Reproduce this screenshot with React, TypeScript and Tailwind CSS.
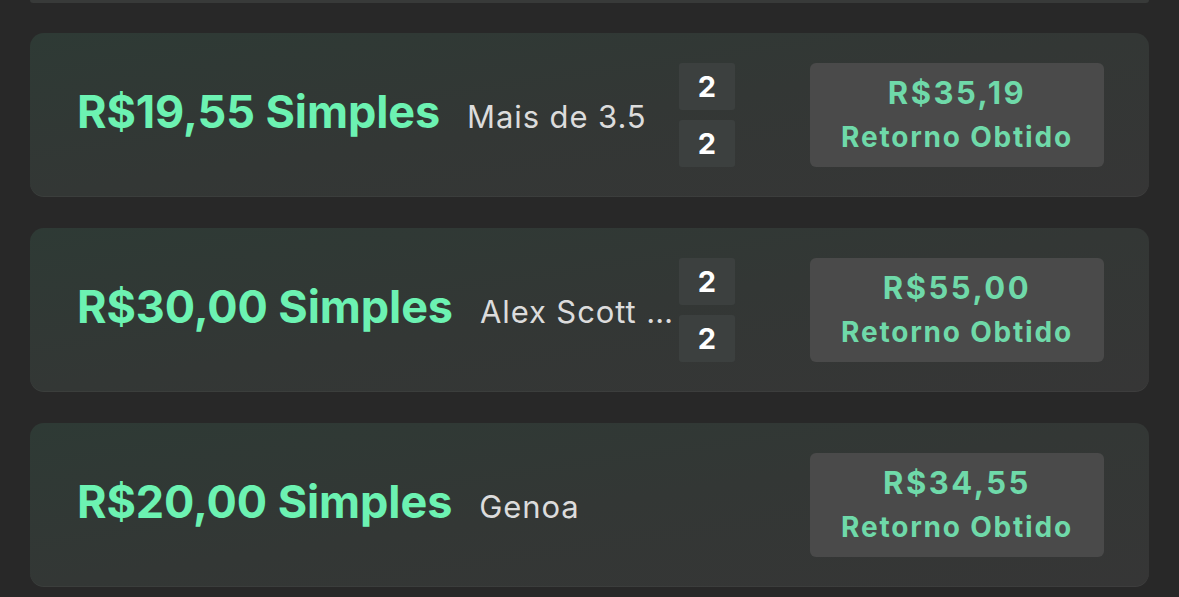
import React from 'react'

type Bet = {
  stake: string
  pick: string
  odds?: [string, string]
  ret: string
}

const bets: Bet[] = [
  { stake: 'R$19,55', pick: 'Mais de 3.5', odds: ['2', '2'], ret: 'R$35,19' },
  { stake: 'R$30,00', pick: 'Alex Scott …', odds: ['2', '2'], ret: 'R$55,00' },
  { stake: 'R$20,00', pick: 'Genoa', ret: 'R$34,55' },
]

function BetCard({ bet }: { bet: Bet }) {
  return (
    <div className="h-[164px] rounded-[14px] bg-gradient-to-br from-[#2e3a35] via-[#333735] to-[#363636] flex items-center pl-[47px] pr-[45px] shadow-[inset_0_-1px_0_rgba(255,255,255,0.04)]">
      <div className="flex items-baseline min-w-0 w-[600px] shrink-0 mb-[6px]">
        <span className="text-[45px] leading-[1.15] font-bold text-[#6cf2b2] whitespace-nowrap tracking-[-0.1px]">
          {bet.stake} Simples
        </span>
        <span className="ml-[27px] text-[31px] leading-[1.3] text-[#dcdcdc] whitespace-nowrap tracking-[0.9px]">
          {bet.pick}
        </span>
      </div>
      <div className="w-[56px] flex flex-col gap-[10px] ml-auto">
        {bet.odds?.map((o, i) => (
          <div
            key={i}
            className="h-[47px] rounded-[3px] bg-[#3c403f] flex items-center justify-center text-[29px] font-bold text-white"
          >
            {o}
          </div>
        ))}
      </div>
      <div className="ml-[75px] w-[294px] h-[104px] rounded-[6px] bg-[#4a4a4a] flex flex-col items-center justify-center gap-[10px] font-bold text-[#6fd9a9] pb-[2px]">
        <span className="text-[31px] leading-[1.2] tracking-[2.5px]">{bet.ret}</span>
        <span className="text-[28px] leading-[1.2] tracking-[1.8px]">Retorno Obtido</span>
      </div>
    </div>
  )
}

export default function App() {
  return (
    <div
      className="w-[1179px] h-[597px] overflow-hidden bg-[#282828] px-[30px]"
      style={{ fontFamily: 'Inter, "Noto Sans", sans-serif' }}
    >
      <div className="h-[3px] rounded-b-[14px] bg-[#383a39]" />
      <div className="flex flex-col gap-[31px] pt-[30px]">
        {bets.map((b, i) => (
          <BetCard key={i} bet={b} />
        ))}
      </div>
    </div>
  )
}
